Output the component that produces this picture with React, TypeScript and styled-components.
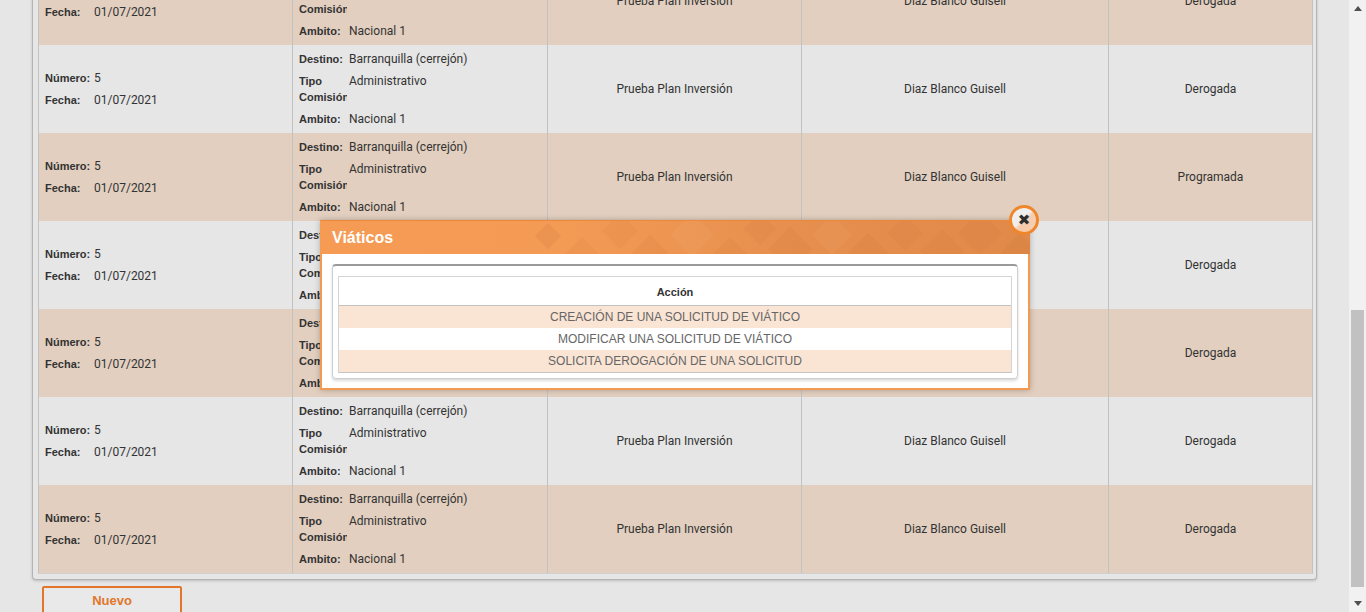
import React from "react";
import styled, { createGlobalStyle } from "styled-components";

const Global = createGlobalStyle`
  html, body { margin: 0; padding: 0; height: 100%; overflow: hidden; background: #e6e6e6; }
  #root { height: 100%; }
  * { box-sizing: border-box; }
`;

const Screen = styled.div`
  display: flex;
  height: 612px;
  width: 1366px;
  overflow: hidden;
  background: #e6e6e6;
`;

const Main = styled.div`
  position: relative;
  flex: 1;
  overflow: hidden;
`;

const ScrollContent = styled.div`
  display: flex;
  flex-direction: column;
  align-items: flex-start;
  padding-left: 32px;
`;

const Panel = styled.div`
  width: 1285px;
  border: 1px solid #b4b4b4;
  border-top: none;
  border-radius: 0 0 4px 4px;
  padding: 0 3px 5px 5px;
  box-shadow: 0 1px 3px rgba(0, 0, 0, 0.18);
  background: #e6e6e6;
`;

const Table = styled.div`
  display: grid;
  grid-template-columns: 253px 255px 254px 307px 204px;
  border-left: 1px solid #c2c2c2;
  border-right: 1px solid #c2c2c2;
  border-bottom: 1px solid #d0d0d0;
  width: 1275px;
`;

const Cell = styled.div<{ $tan: boolean; $first?: boolean; $center?: boolean }>`
  height: 88px;
  background: ${(p) => (p.$tan ? "#e2cfbf" : "#e6e6e6")};
  border-left: ${(p) => (p.$first ? "none" : "1px solid #c2c2c2")};
  display: flex;
  align-items: center;
  justify-content: ${(p) => (p.$center ? "center" : "flex-start")};
  padding: 3px 6px;
  font-family: Roboto, "Liberation Sans", Arial, sans-serif;
  font-size: 12px;
  color: #333;
`;

const InfoGrid = styled.div<{ $label: number; $gap: number }>`
  display: grid;
  grid-template-columns: ${(p) => p.$label}px 1fr;
  column-gap: ${(p) => p.$gap}px;
  width: 100%;
`;

const Label = styled.div`
  font-family: "Liberation Sans", Arial, sans-serif;
  font-weight: bold;
  font-size: 11px;
  line-height: 16px;
  padding: 3px 0;
  color: #333;
  overflow: hidden;
`;

const Value = styled.div`
  font-family: Roboto, "Liberation Sans", Arial, sans-serif;
  font-size: 12px;
  line-height: 16px;
  padding: 3px 0;
  color: #333;
  white-space: nowrap;
`;

const NewButton = styled.button`
  margin: 6px 0 0 10px;
  width: 140px;
  height: 28px;
  border: 2px solid #e2772a;
  border-radius: 2px;
  background: #e9e9e9;
  color: #e0772c;
  font-family: "Liberation Sans", Arial, sans-serif;
  font-weight: bold;
  font-size: 13px;
  padding: 0;
  cursor: pointer;
`;

/* Modal */
const Modal = styled.div`
  position: absolute;
  left: 320px;
  top: 220px;
  width: 710px;
  height: 170px;
  border: 2px solid #f39a52;
  border-top: none;
  background: #fff;
  box-shadow: 0 0 6px rgba(0, 0, 0, 0.25);
  display: flex;
  flex-direction: column;
`;

const ModalHeader = styled.div`
  position: relative;
  height: 34px;
  margin: 0 -2px;
  border-top: 1px solid #ec8838;
  background: linear-gradient(90deg, #f69b54 0%, #f39a55 35%, #e78f4e 65%, #e08949 100%);
  display: flex;
  align-items: center;
  padding-left: 12px;
  overflow: hidden;
`;

const Pattern = styled.svg`
  position: absolute;
  left: 0;
  top: 0;
  width: 710px;
  height: 34px;
  pointer-events: none;
`;

const ModalTitle = styled.span`
  position: relative;
  font-family: "Liberation Sans", Arial, sans-serif;
  font-weight: bold;
  font-size: 16px;
  color: #fff;
`;

const CloseButton = styled.button`
  position: absolute;
  left: 687px;
  top: -15px;
  width: 30px;
  height: 30px;
  border-radius: 50%;
  border: 3px solid #f0862b;
  background: linear-gradient(135deg, rgba(240, 240, 240, 0.97) 45%, rgba(246, 205, 175, 0.97) 55%);
  display: flex;
  align-items: center;
  justify-content: center;
  padding: 0;
  color: #2e2e2e;
  font-size: 15px;
  font-family: "DejaVu Sans", sans-serif;
  font-weight: bold;
  line-height: 1;
  cursor: pointer;
`;

const ModalBody = styled.div`
  flex: 1;
  padding: 10px 10px 9px 10px;
`;

const Fieldset = styled.div`
  border: 1px solid #cfcfcf;
  border-top: 2px solid #9a9a9a;
  border-radius: 4px;
  box-shadow: 0 2px 3px rgba(0, 0, 0, 0.15);
  padding: 10px 5px 6px 5px;
  height: 115px;
`;

const ActionTable = styled.div`
  border: 1px solid #d4d4d4;
  border-bottom-color: #c4c4c4;
  display: flex;
  flex-direction: column;
`;

const ActionHead = styled.div`
  height: 29px;
  display: flex;
  align-items: center;
  justify-content: center;
  border-bottom: 1px solid #c2c2c2;
  font-family: "Liberation Sans", Arial, sans-serif;
  font-weight: bold;
  font-size: 11px;
  color: #333;
  padding-top: 2px;
`;

const ActionRow = styled.div<{ $alt: boolean }>`
  height: 22px;
  display: flex;
  align-items: center;
  justify-content: center;
  background: ${(p) => (p.$alt ? "#fae4d4" : "#ffffff")};
  font-family: "Liberation Sans", Arial, sans-serif;
  font-size: 12px;
  color: #666;
`;

/* Scrollbar */
const ScrollBar = styled.div`
  width: 17px;
  background: #f1f1f1;
  display: flex;
  flex-direction: column;
`;

const Arrow = styled.div`
  height: 17px;
  display: flex;
  align-items: center;
  justify-content: center;
`;

const Track = styled.div`
  position: relative;
  flex: 1;
`;

const Thumb = styled.div`
  position: absolute;
  left: 2px;
  right: 2px;
  background: #c1c1c1;
`;

const rows = [
  "Derogada",
  "Derogada",
  "Programada",
  "Derogada",
  "Derogada",
  "Derogada",
  "Derogada",
];

const actions = [
  "CREACIÓN DE UNA SOLICITUD DE VIÁTICO",
  "MODIFICAR UNA SOLICITUD DE VIÁTICO",
  "SOLICITA DEROGACIÓN DE UNA SOLICITUD",
];

const diamonds: [number, number, number, string, number][] = [
  [228, 15, 13, "#c06a30", 0.14],
  [262, 32, 16, "#c06a30", 0.08],
  [300, 10, 18, "#c06a30", 0.08],
  [330, 34, 20, "#c06a30", 0.1],
  [372, 14, 22, "#ffffff", 0.04],
  [410, 36, 20, "#c06a30", 0.1],
  [440, 8, 16, "#c06a30", 0.08],
  [470, 28, 22, "#c06a30", 0.1],
  [512, 14, 20, "#ffffff", 0.04],
  [548, 34, 22, "#c06a30", 0.1],
  [585, 12, 18, "#c06a30", 0.08],
  [622, 30, 22, "#c06a30", 0.07],
  [660, 12, 22, "#c06a30", 0.08],
  [700, 32, 20, "#c06a30", 0.09],
];

function Diamond({ x, y, r, c, o }: { x: number; y: number; r: number; c: string; o: number }) {
  return <polygon points={`${x},${y - r} ${x + r},${y} ${x},${y + r} ${x - r},${y}`} fill={c} opacity={o} />;
}

export default function App() {
  const trackHeight = 612 - 34;
  const thumbTop = 310 - 17;
  const thumbHeight = 277;
  return (
    <>
      <Global />
      <Screen>
        <Main>
          <ScrollContent style={{ marginTop: -43 }}>
            <Panel>
              <Table>
                {rows.map((estado, i) => {
                  const tan = i % 2 === 0;
                  return (
                    <React.Fragment key={i}>
                      <Cell $tan={tan} $first>
                        <InfoGrid $label={49} $gap={0}>
                          <Label>Número:</Label>
                          <Value>5</Value>
                          <Label>Fecha:</Label>
                          <Value>01/07/2021</Value>
                        </InfoGrid>
                      </Cell>
                      <Cell $tan={tan}>
                        <InfoGrid $label={48} $gap={2}>
                          <Label>Destino:</Label>
                          <Value>Barranquilla (cerrejón)</Value>
                          <Label>Tipo Comisión</Label>
                          <Value>Administrativo</Value>
                          <Label>Ambito:</Label>
                          <Value>Nacional 1</Value>
                        </InfoGrid>
                      </Cell>
                      <Cell $tan={tan} $center>Prueba Plan Inversión</Cell>
                      <Cell $tan={tan} $center>Diaz Blanco Guisell</Cell>
                      <Cell $tan={tan} $center>{estado}</Cell>
                    </React.Fragment>
                  );
                })}
              </Table>
            </Panel>
            <NewButton>Nuevo</NewButton>
          </ScrollContent>

          <Modal>
            <ModalHeader>
              <Pattern viewBox="0 0 710 34">
                {diamonds.map(([x, y, r, c, o], k) => (
                  <Diamond key={k} x={x} y={y} r={r} c={c} o={o} />
                ))}
              </Pattern>
              <ModalTitle>Viáticos</ModalTitle>
            </ModalHeader>
            <CloseButton aria-label="Cerrar">✖</CloseButton>
            <ModalBody>
              <Fieldset>
                <ActionTable>
                  <ActionHead>Acción</ActionHead>
                  {actions.map((a, k) => (
                    <ActionRow key={a} $alt={k % 2 === 0}>
                      {a}
                    </ActionRow>
                  ))}
                </ActionTable>
              </Fieldset>
            </ModalBody>
          </Modal>
        </Main>
        <ScrollBar>
          <Arrow>
            <svg width="8" height="5" viewBox="0 0 8 5">
              <polygon points="0,5 4,0 8,5" fill="#505050" />
            </svg>
          </Arrow>
          <Track style={{ height: trackHeight }}>
            <Thumb style={{ top: thumbTop, height: thumbHeight }} />
          </Track>
          <Arrow>
            <svg width="8" height="5" viewBox="0 0 8 5">
              <polygon points="0,0 8,0 4,5" fill="#505050" />
            </svg>
          </Arrow>
        </ScrollBar>
      </Screen>
    </>
  );
}
